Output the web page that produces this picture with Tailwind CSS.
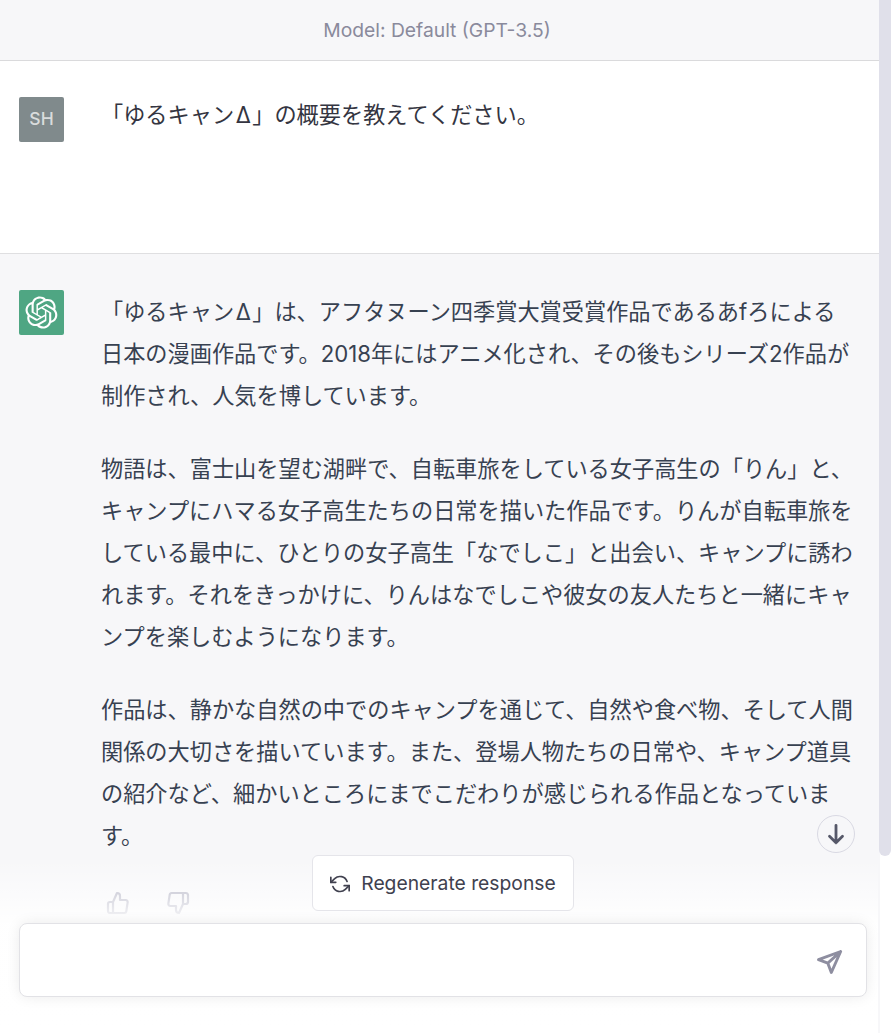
<!DOCTYPE html>
<html lang="ja"><head><meta charset="utf-8"><title>Chat</title>
<script src="https://cdn.jsdelivr.net/npm/@tailwindcss/browser@4"></script></head>
<body class="relative h-[1033px] w-[891px] overflow-hidden bg-white font-['Inter','Noto_Sans_CJK_JP',sans-serif]">
<div class="absolute right-0 top-0 h-[856px] w-[12px] rounded-b-md bg-[#e0e0ea]"></div>
<main class="w-[880px]">
  <header class="flex h-[61px] items-center justify-center border-b border-[#dadadc] bg-[#f7f7f9] pr-[6px] text-[19.3px] text-[#8a8a9c]">Model: Default (GPT-3.5)</header>
  <section class="flex h-[193px] gap-[37px] border-b border-[#dfdfe1] bg-white pl-[19px] pt-[36px]">
    <div class="flex size-[45px] items-center justify-center rounded-[2px] bg-[#808a8c] text-[17.5px] font-medium text-[#d9dcdc]">SH</div>
    <p class="-mt-[3px] text-[22.19px] leading-[42px] text-[#343541]">「ゆるキャン<span class="px-[1.5px]">Δ</span>」の概要を教えてください。</p>
  </section>
  <section class="flex h-[779px] gap-[37px] bg-[#f7f7f9] pl-[19px] pt-[36px]">
    <div class="flex size-[45px] shrink-0 items-center justify-center rounded-[2px] bg-[#4fa683]">
      <svg viewBox="0 0 41 41" class="size-[33px]" fill="#fff"><path d="M37.5324 16.8707C37.9808 15.5241 38.1363 14.0974 37.9886 12.6859C37.8409 11.2744 37.3934 9.91076 36.676 8.68622C35.6126 6.83404 33.9882 5.3676 32.0373 4.4985C30.0864 3.62941 27.9098 3.40259 25.8215 3.85078C24.8796 2.7893 23.7219 1.94125 22.4257 1.36341C21.1295 0.785575 19.7249 0.491269 18.3058 0.500197C16.1708 0.495044 14.0893 1.16803 12.3614 2.42214C10.6335 3.67624 9.34853 5.44666 8.6917 7.47815C7.30085 7.76286 5.98686 8.3414 4.8377 9.17505C3.68854 10.0087 2.73073 11.0782 2.02839 12.312C0.956464 14.1591 0.498905 16.2988 0.721698 18.4228C0.944492 20.5467 1.83612 22.5449 3.268 24.1293C2.81966 25.4759 2.66413 26.9026 2.81182 28.3141C2.95951 29.7256 3.40701 31.0892 4.12437 32.3138C5.18791 34.1659 6.8123 35.6322 8.76321 36.5013C10.7141 37.3704 12.8907 37.5973 14.9789 37.1492C15.9208 38.2107 17.0786 39.0587 18.3747 39.6366C19.6709 40.2144 21.0755 40.5087 22.4946 40.4998C24.6307 40.5054 26.7133 39.8321 28.4418 38.5772C30.1704 37.3223 31.4556 35.5506 32.1119 33.5179C33.5027 33.2332 34.8167 32.6547 35.9659 31.821C37.115 30.9874 38.0728 29.9178 38.7752 28.684C39.8458 26.8371 40.3023 24.6979 40.0789 22.5748C39.8556 20.4517 38.9639 18.4544 37.5324 16.8707ZM22.4978 37.8849C20.7443 37.8874 19.0459 37.2733 17.6994 36.1501C17.7601 36.117 17.8666 36.0586 17.936 36.0161L25.9004 31.4156C26.1003 31.3019 26.2663 31.137 26.3813 30.9378C26.4964 30.7386 26.5563 30.5124 26.5549 30.2825V19.0542L29.9213 20.998C29.9389 21.0068 29.9541 21.0198 29.9656 21.0359C29.977 21.052 29.9842 21.0707 29.9867 21.0902V30.3889C29.9842 32.375 29.1946 34.2791 27.7909 35.6841C26.3872 37.0892 24.4838 37.8806 22.4978 37.8849ZM6.39227 31.0064C5.51397 29.4888 5.19742 27.7107 5.49804 25.9832C5.55718 26.0187 5.66048 26.0818 5.73461 26.1244L13.699 30.7248C13.8975 30.8408 14.1233 30.902 14.3532 30.902C14.583 30.902 14.8088 30.8408 15.0073 30.7248L24.731 25.1103V28.9979C24.7321 29.0177 24.7283 29.0376 24.7199 29.0556C24.7115 29.0736 24.6988 29.0893 24.6829 29.1012L16.6317 33.7497C14.9096 34.7416 12.8643 35.0097 10.9447 34.4954C9.02506 33.9811 7.38785 32.7263 6.39227 31.0064ZM4.29707 13.6194C5.17156 12.0998 6.55279 10.9364 8.19885 10.3327C8.19885 10.4013 8.19491 10.5228 8.19491 10.6071V19.808C8.19351 20.0378 8.25334 20.2638 8.36823 20.4629C8.48312 20.6619 8.64893 20.8267 8.84863 20.9404L18.5723 26.5542L15.206 28.4979C15.1894 28.5089 15.1703 28.5155 15.1505 28.5173C15.1307 28.5191 15.1107 28.516 15.0924 28.5082L7.04046 23.8557C5.32135 22.8601 4.06716 21.2235 3.55289 19.3046C3.03862 17.3858 3.30624 15.3413 4.29707 13.6194ZM31.955 20.0556L22.2312 14.4411L25.5976 12.4981C25.6142 12.4872 25.6333 12.4805 25.6531 12.4787C25.6729 12.4769 25.6928 12.4801 25.7111 12.4879L33.7631 17.1364C34.9967 17.849 36.0017 18.8982 36.6606 20.1613C37.3194 21.4244 37.6047 22.849 37.4832 24.2684C37.3617 25.6878 36.8382 27.0432 35.9743 28.1759C35.1103 29.3086 33.9415 30.1717 32.6047 30.6641C32.6047 30.5947 32.6047 30.4733 32.6047 30.3889V21.188C32.6066 20.9586 32.5474 20.7328 32.4332 20.5338C32.319 20.3348 32.154 20.1698 31.955 20.0556ZM35.3055 15.0128C35.2464 14.9765 35.1431 14.9142 35.069 14.8717L27.1045 10.2712C26.906 10.1554 26.6803 10.0943 26.4504 10.0943C26.2206 10.0943 25.9948 10.1554 25.7963 10.2712L16.0726 15.8858V11.9982C16.0715 11.9783 16.0753 11.9585 16.0837 11.9405C16.0921 11.9225 16.1048 11.9068 16.1207 11.8949L24.1719 7.25025C25.4053 6.53903 26.8158 6.19376 28.2383 6.25482C29.6608 6.31589 31.0364 6.78077 32.2044 7.59508C33.3723 8.40939 34.2842 9.53945 34.8334 10.8531C35.3826 12.1667 35.5464 13.6095 35.3055 15.0128ZM14.2424 21.9419L10.8752 19.9981C10.8576 19.9893 10.8423 19.9763 10.8309 19.9602C10.8195 19.9441 10.8122 19.9254 10.8098 19.9058V10.6071C10.8107 9.18295 11.2173 7.78848 11.9819 6.58696C12.7466 5.38544 13.8377 4.42659 15.1275 3.82264C16.4173 3.21869 17.8524 2.99464 19.2649 3.1767C20.6775 3.35876 22.0089 3.93941 23.1034 4.85067C23.0427 4.88379 22.937 4.94215 22.8668 4.98473L14.9024 9.58517C14.7025 9.69878 14.5366 9.86356 14.4215 10.0626C14.3065 10.2616 14.2466 10.4877 14.2479 10.7175L14.2424 21.9419ZM16.071 17.9991L20.4018 15.4978L24.7325 17.9975V22.9985L20.4018 25.4983L16.071 22.9985V17.9991Z"/></svg>
    </div>
    <div class="mt-[1px] whitespace-nowrap text-[22.19px] leading-[42.2px] text-[#374151]">
      <p class="mb-[30px]">「ゆるキャン<span class="px-[1.5px]">Δ</span>」は、アフタヌーン四季賞大賞受賞作品であるあfろによる<br>日本の漫画作品です。2018年にはアニメ化され、その後もシリーズ2作品が<br>制作され、人気を博しています。</p>
      <p class="mb-[30px]">物語は、富士山を望む湖畔で、自転車旅をしている女子高生の「りん」と、<br>キャンプにハマる女子高生たちの日常を描いた作品です。りんが自転車旅を<br>している最中に、ひとりの女子高生「なでしこ」と出会い、キャンプに誘わ<br>れます。それをきっかけに、りんはなでしこや彼女の友人たちと一緒にキャ<br>ンプを楽しむようになります。</p>
      <p>作品は、静かな自然の中でのキャンプを通じて、自然や食べ物、そして人間<br>関係の大切さを描いています。また、登場人物たちの日常や、キャンプ道具<br>の紹介など、細かいところにまでこだわりが感じられる作品となっていま<br>す。</p>
      <div class="mt-[34px] flex gap-[36px] pl-[5px] text-[#acacbe]">
        <svg viewBox="0 0 24 24" class="size-[24px]" fill="none" stroke="currentColor" stroke-width="2.2" stroke-linecap="round" stroke-linejoin="round"><path d="M14 9V5a3 3 0 0 0-3-3l-4 9v11h11.28a2 2 0 0 0 2-1.7l1.38-9a2 2 0 0 0-2-2.3zM7 22H4a2 2 0 0 1-2-2v-7a2 2 0 0 1 2-2h3"/></svg>
        <svg viewBox="0 0 24 24" class="size-[24px]" fill="none" stroke="currentColor" stroke-width="2.2" stroke-linecap="round" stroke-linejoin="round"><path d="M10 15v4a3 3 0 0 0 3 3l4-9V2H5.72a2 2 0 0 0-2 1.7l-1.38 9a2 2 0 0 0 2 2.3zm7-13h2.67A2.31 2.31 0 0 1 22 4v7a2.31 2.31 0 0 1-2.33 2H17"/></svg>
      </div>
    </div>
  </section>
</main>
<div class="absolute bottom-0 left-0 h-[173px] w-[878px] bg-gradient-to-b from-white/0 via-white/95 via-[37%] to-white">
  <button class="absolute left-[312px] top-[-5px] flex h-[56px] w-[262px] items-center justify-center gap-[11px] rounded-[6px] border border-[#e5e5ea] bg-white pt-[1px] text-[19.3px] text-[#40414f]">
    <svg viewBox="0 0 24 24" class="size-[20px]" fill="none" stroke="currentColor" stroke-width="2" stroke-linecap="round" stroke-linejoin="round"><polyline points="1 4 1 10 7 10"/><polyline points="23 20 23 14 17 14"/><path d="M20.49 9A9 9 0 0 0 5.64 5.64L1 10m22 4l-4.64 4.36A9 9 0 0 1 3.51 15"/></svg>
    Regenerate response
  </button>
  <div class="absolute left-[19px] top-[63px] flex h-[74px] w-[848px] items-center justify-end rounded-[8px] border border-[#e2e2e6] bg-white pr-[23px] pt-[4px] shadow-[0_0_14px_rgba(0,0,0,0.08)]">
    <svg viewBox="0 0 24 24" class="size-[28px] text-[#8e8ea0]" fill="none" stroke="currentColor" stroke-width="2.5" stroke-linecap="round" stroke-linejoin="round"><path d="M22 3 3 10l8 3 3 8zM22 3 11 13"/></svg>
  </div>
</div>
<div class="absolute left-[817px] top-[815px] flex size-[38px] items-center justify-center rounded-full border border-[#d9d9e3] bg-[#f7f7f9] text-[#565869]">
  <svg viewBox="0 0 24 24" class="size-[26px]" fill="none" stroke="currentColor" stroke-width="2.6" stroke-linecap="round" stroke-linejoin="round"><path d="M12 4v16M6 14l6 6 6-6"/></svg>
</div>
</body></html>
